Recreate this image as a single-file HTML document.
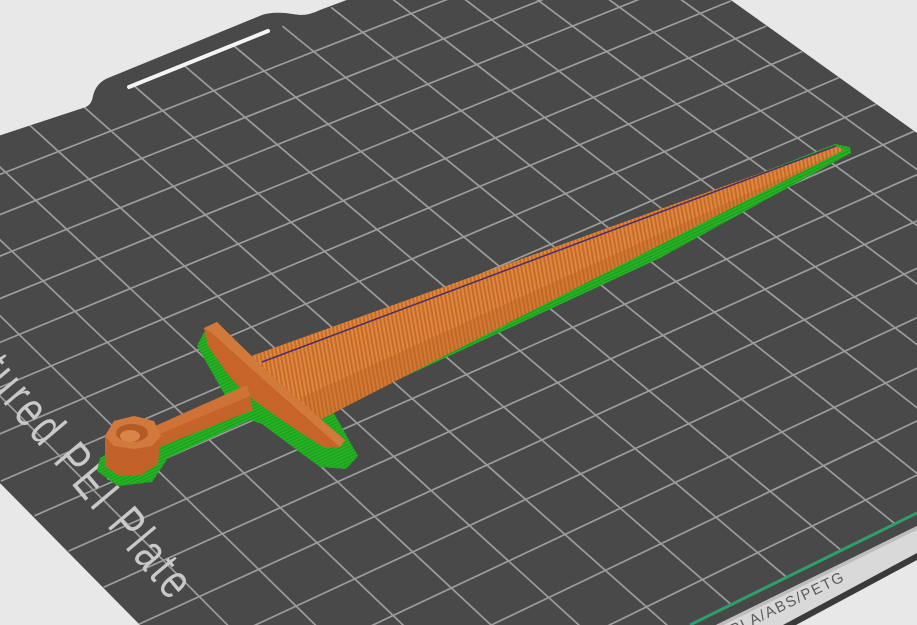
<!DOCTYPE html>
<html><head><meta charset="utf-8"><style>
html,body{margin:0;padding:0;background:#e8e8e8;width:917px;height:625px;overflow:hidden;}
svg{display:block}
</style></head><body>
<svg width="917" height="625" viewBox="0 0 917 625" xmlns="http://www.w3.org/2000/svg">
<defs>
<clipPath id="plate"><path d="M-5,137 L86,107 Q92,104 93,96 Q96,83 108,78 L262,15 Q270,12 285,13 L300,15 Q310,15 320,10 L352,-2 L728,-2 L917,133 L917,513 L690,625 L140,625 L-5,478 Z"/></clipPath>
<pattern id="str" width="4" height="4" patternUnits="userSpaceOnUse" patternTransform="rotate(-10)">
<rect width="4" height="4" fill="#c86a2a"/><rect width="2" height="4" fill="#dd8a3e"/></pattern>
<pattern id="gst" width="3" height="3" patternUnits="userSpaceOnUse" patternTransform="rotate(-25)">
<rect width="3" height="3" fill="#25b325"/><rect width="3" height="1" fill="#1c9a1c"/></pattern>
</defs>
<rect width="917" height="625" fill="#e8e8e8"/>
<path d="M-5,137 L86,107 Q92,104 93,96 Q96,83 108,78 L262,15 Q270,12 285,13 L300,15 Q310,15 320,10 L352,-2 L728,-2 L917,133 L917,513 L690,625 L140,625 L-5,478 Z" fill="#484948"/>
<g clip-path="url(#plate)" stroke="#9c9d9c" stroke-width="1.7" fill="none">
<path d="M-187.2,207.5L379,777.5M-132.1,186.2L440.1,747.3M-77.9,165.3L500.1,717.8M-24.2,144.5L559.2,688.6M28.6,124.2L617.3,660M80.7,104L674.5,631.8M132.2,84.2L730.7,604.1M182.9,64.5L786.1,576.8M233,45.2L840.7,549.9M282.4,26.1L894.4,523.4M331.2,7.3L947.2,497.4M379.3,-11.3L999.2,471.7M426.9,-29.7L1050.5,446.5M473.8,-47.8L1101,421.6M520.1,-65.7L1150.7,397.1M565.8,-83.4L1199.7,372.9"/>
<path d="M-214.7,258.4L628.9,-71.7M-185.7,288.2L662.3,-47.9M-156.2,318.8L696.4,-23.7M-126.1,349.9L730.9,0.9M-95.3,381.7L766.3,26.1M-63.9,414.1L802.2,51.5M-31.9,447.4L838.9,77.6M0.9,481.1L876.1,104.1M34.4,515.8L914.2,131.2M68.5,551.1L953,158.7M103.5,587.3L992.5,186.9M139.1,624.1L1032.8,215.4M175.7,662L1074,244.7M213,700.5L1115.9,274.5M251.3,740.1L1158.8,305M290.4,780.5L1202.4,335.9"/>
</g>
<path d="M129,87 L268,31" stroke="#f4f4f4" stroke-width="4" stroke-linecap="round"/>
<polygon points="690,625 917,513 917,526 716,625" fill="#474847"/>
<polygon points="716,625 917,526 917,530 724,625" fill="#bdbdbd"/>
<polygon points="724,625 917,530 917,553 783,625" fill="#d9d9d9"/>
<polygon points="783,625 917,553 917,560 796,625" fill="#3a3a3a"/>
<line x1="690" y1="625" x2="917" y2="513" stroke="#2f9e6e" stroke-width="3"/>
<text transform="translate(846,580) rotate(-26)" text-anchor="end" font-family="Liberation Sans, sans-serif" font-size="15" letter-spacing="1.5" fill="#5a5a5a">PLA/ABS/PETG</text>
<text transform="translate(172,604) rotate(50) scale(0.85,1.15)" text-anchor="end" font-family="Liberation Sans, sans-serif" font-size="44" letter-spacing="4" fill="#c9c9c9">Textured PEI Plate</text>
<path d="M835,144 L850,147 L851,153 L660,258 L380,388 L332,410 L358,456 L346,469 L320,467 L286,442 L262,424 L250,420 L168,458 L152,482 L118,486 L97,471 L100,458 L130,440 L226,397 L197,346 L204,332 L262,368 Z" fill="url(#gst)"/>
<path d="M240,360 L836,146 L844,150 L320,420 L260,395 Z" fill="url(#str)"/>
<path d="M262,362 L836,146" stroke="#4a2f6a" stroke-width="1.5"/>
<path d="M300,398 L843,150 L320,420 Z" fill="#b85e22" opacity="0.35"/>
<path d="M204,328 L217,322 Q240,345 262,366 Q300,402 345,440 L340,447 L325,448 Q295,430 262,406 Q236,388 222,366 L208,346 Z" fill="#c6642a"/>
<path d="M204,328 L217,322 Q240,345 262,366 Q300,402 345,440 L340,447 Q300,412 262,378 Q236,355 212,333 Z" fill="#d27a3c"/>
<path d="M247,385 L153,427 L157,448 L253,410 Z" fill="#c4632a"/>
<path d="M247,385 L153,427 L155,436 L250,396 Z" fill="#cf7236"/>
<path d="M105,436 L114,421 L134,416 L154,421 L161,436 L158,464 L141,475 L119,476 L105,466 Z" fill="#c2612a"/>
<path d="M105,436 L114,421 L134,416 L154,421 L161,436 L152,446 L134,449 L114,446 Z" fill="#d27a3e"/>
<ellipse cx="132" cy="433" rx="16" ry="9" fill="#b35a25"/>
<ellipse cx="130" cy="436" rx="10" ry="6" fill="#d9854a"/>
</svg>
</body></html>
